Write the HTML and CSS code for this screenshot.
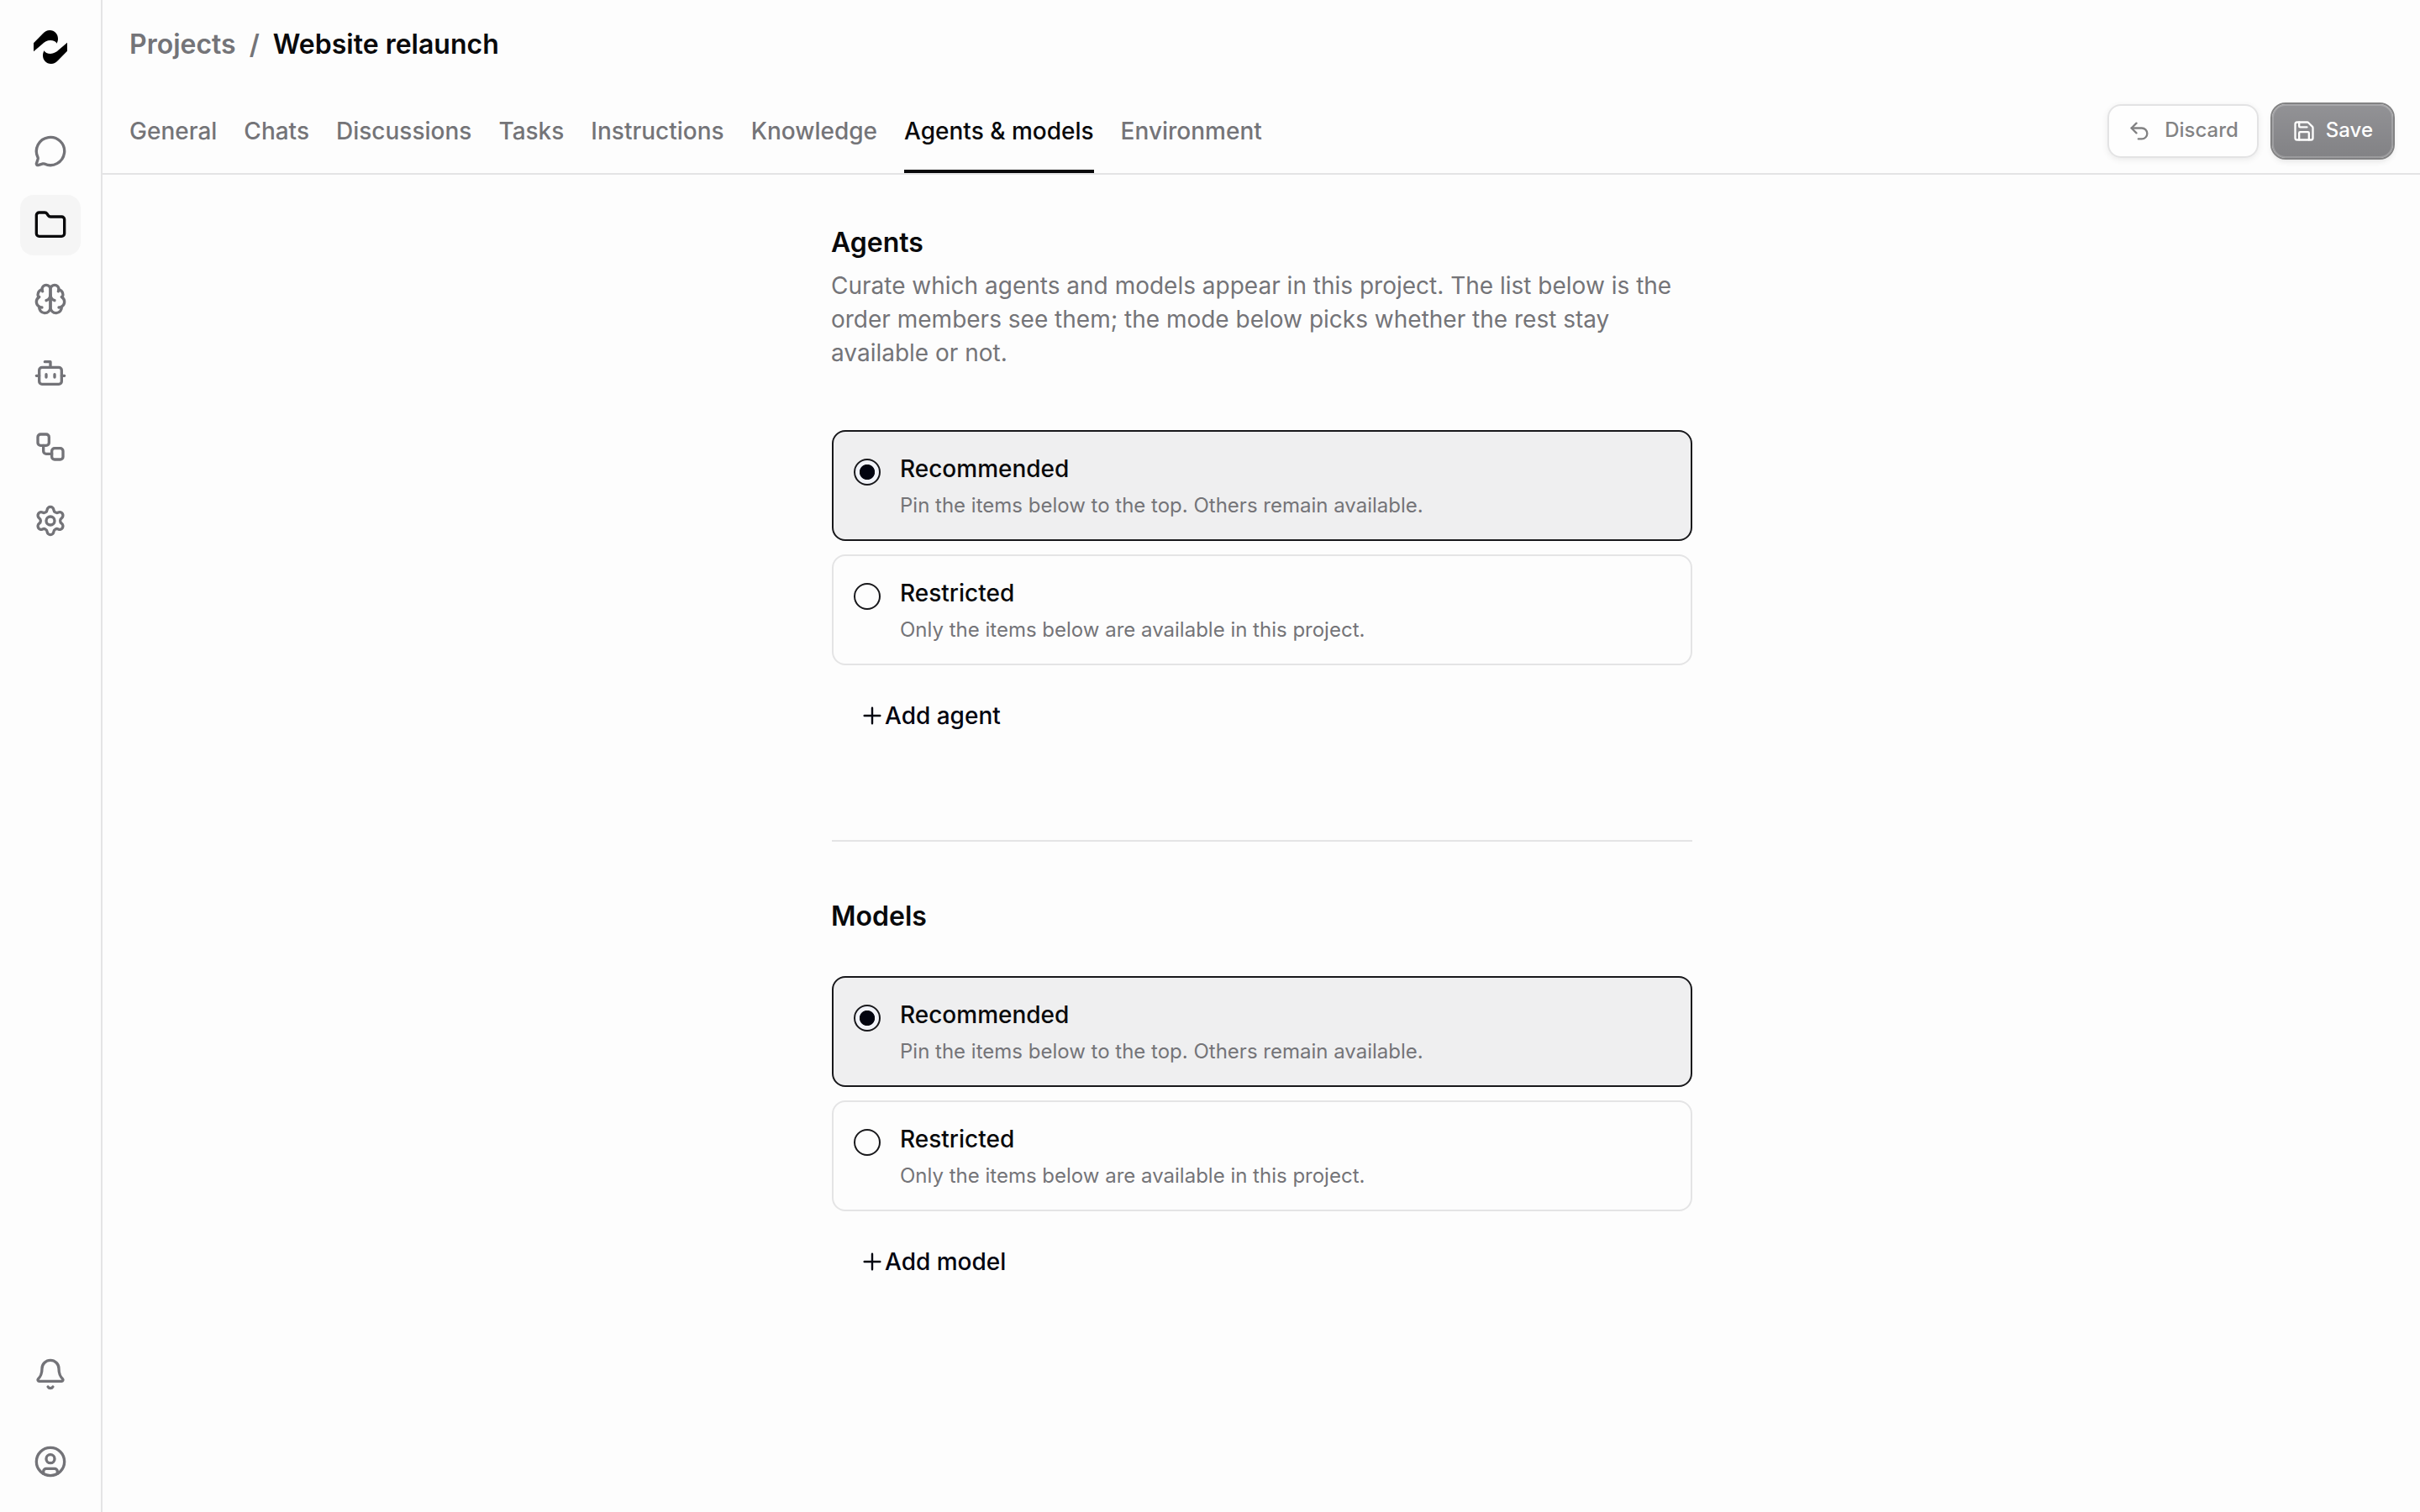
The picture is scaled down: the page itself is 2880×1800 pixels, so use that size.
FILE: index.html
```html
<!DOCTYPE html>
<html lang="en">
<head>
  <meta charset="UTF-8" />
  <meta name="viewport" content="width=device-width, initial-scale=1" />
  <title>Website relaunch - Agents &amp; models</title>
  <link rel="stylesheet" href="styles.css">
</head>
<body>
  <!-- Sidebar Navigation -->
  <nav class="sidebar">
    <a class="logo" href="#">
      <svg viewBox="0 0 40 40" fill="currentColor">
        <path id="logo-half" d="M0 25.3V15.2L11 4C13.600 1.300 16 0 19.200 0C25 0 29 4.500 29 10C29 12 28.500 13.800 27.500 15.700C26.500 13.300 23.500 12 20 12C16 12 13 14 10 16.700Z" />
        <use href="#logo-half" transform="rotate(180 20 20)" />
      </svg>
    </a>

    <a class="nav-item" href="#">
      <svg class="icon" viewBox="0 0 24 24"><path d="M2.992 16.342a2 2 0 0 1 .094 1.167l-1.065 3.290a1 1 0 0 0 1.236 1.168l3.413-.998a2 2 0 0 1 1.099.092 10 10 0 1 0-4.777-4.719" /></svg>
    </a>
    <a class="nav-item active" href="#">
      <svg class="icon" viewBox="0 0 24 24"><path d="M20 20a2 2 0 0 0 2-2V8a2 2 0 0 0-2-2h-7.900a2 2 0 0 1-1.690-.900L9.600 3.900A2 2 0 0 0 7.930 3H4a2 2 0 0 0-2 2v13a2 2 0 0 0 2 2Z" /></svg>
    </a>
    <a class="nav-item" href="#">
      <svg class="icon" viewBox="0 0 24 24">
        <path d="M12 5a3 3 0 1 0-5.997.125 4 4 0 0 0-2.526 5.770 4 4 0 0 0 .556 6.588A4 4 0 1 0 12 18Z" />
        <path d="M12 5a3 3 0 1 1 5.997.125 4 4 0 0 1 2.526 5.770 4 4 0 0 1-.556 6.588A4 4 0 1 1 12 18Z" />
        <path d="M15 13a4.500 4.500 0 0 1-3-4 4.500 4.500 0 0 1-3 4" />
        <path d="M17.599 6.500a3 3 0 0 0 .399-1.375" />
        <path d="M6.003 5.125A3 3 0 0 0 6.401 6.500" />
        <path d="M3.477 10.896a4 4 0 0 1 .585-.396" />
        <path d="M19.938 10.500a4 4 0 0 1 .585.396" />
        <path d="M6 18a4 4 0 0 1-1.967-.516" />
        <path d="M19.967 17.484A4 4 0 0 1 18 18" />
      </svg>
    </a>
    <a class="nav-item" href="#">
      <svg class="icon" viewBox="0 0 24 24">
        <path d="M12 8V4H8" />
        <rect width="16" height="12" x="4" y="8" rx="2" />
        <path d="M2 14h2M20 14h2M15 13v2M9 13v2" />
      </svg>
    </a>
    <a class="nav-item" href="#">
      <svg class="icon" viewBox="0 0 24 24">
        <rect width="8" height="8" x="3" y="3" rx="2" />
        <path d="M7 11v4a2 2 0 0 0 2 2h4" />
        <rect width="8" height="8" x="13" y="13" rx="2" />
      </svg>
    </a>
    <a class="nav-item" href="#">
      <svg class="icon" viewBox="0 0 24 24">
        <path d="M9.671 4.136a2.340 2.340 0 0 1 4.659 0 2.340 2.340 0 0 0 3.319 1.915 2.340 2.340 0 0 1 2.330 4.033 2.340 2.340 0 0 0 0 3.831 2.340 2.340 0 0 1-2.330 4.033 2.340 2.340 0 0 0-3.319 1.915 2.340 2.340 0 0 1-4.659 0 2.340 2.340 0 0 0-3.320-1.915 2.340 2.340 0 0 1-2.330-4.033 2.340 2.340 0 0 0 0-3.831A2.340 2.340 0 0 1 6.350 6.051a2.340 2.340 0 0 0 3.319-1.915" />
        <circle cx="12" cy="12" r="3" />
      </svg>
    </a>

    <div class="sidebar-bottom">
      <a class="nav-item" href="#">
        <svg class="icon" viewBox="0 0 24 24">
          <path d="M10.268 21a2 2 0 0 0 3.464 0" />
          <path d="M3.262 15.326A1 1 0 0 0 4 17h16a1 1 0 0 0 .740-1.673C19.410 13.956 18 12.499 18 8A6 6 0 0 0 6 8c0 4.499-1.411 5.956-2.738 7.326" />
        </svg>
      </a>
      <a class="nav-item" href="#">
        <svg class="icon" viewBox="0 0 24 24">
          <circle cx="12" cy="12" r="10" />
          <circle cx="12" cy="10" r="3" />
          <path d="M7 20.662V19a2 2 0 0 1 2-2h6a2 2 0 0 1 2 2v1.662" />
        </svg>
      </a>
    </div>
  </nav>

  <!-- Main Content Area -->
  <div class="main-container">
    <header>
      <div class="breadcrumb">
        <a href="#">Projects</a>
        <span>/</span>
        <h1>Website relaunch</h1>
      </div>
      <div class="tab-bar">
        <div class="tabs">
          <a class="tab" href="#">General</a>
          <a class="tab" href="#">Chats</a>
          <a class="tab" href="#">Discussions</a>
          <a class="tab" href="#">Tasks</a>
          <a class="tab" href="#">Instructions</a>
          <a class="tab" href="#">Knowledge</a>
          <a class="tab active" href="#">Agents &amp; models</a>
          <a class="tab" href="#">Environment</a>
        </div>
        <div class="actions">
          <button class="btn btn-discard" disabled>
            <svg class="icon" viewBox="0 0 24 24"><path d="M9 14 4 9l5-5" /><path d="M4 9h10.500a5.500 5.500 0 0 1 5.500 5.500a5.500 5.500 0 0 1-5.500 5.500H11" /></svg>
            <span>Discard</span>
          </button>
          <button class="btn btn-save" disabled>
            <svg class="icon" viewBox="0 0 24 24">
              <path d="M15.200 3a2 2 0 0 1 1.400.600l3.800 3.800a2 2 0 0 1 .600 1.400V19a2 2 0 0 1-2 2H5a2 2 0 0 1-2-2V5a2 2 0 0 1 2-2z" />
              <path d="M17 21v-7a1 1 0 0 0-1-1H8a1 1 0 0 0-1 1v7" />
              <path d="M7 3v4a1 1 0 0 0 1 1h7" />
            </svg>
            <span>Save</span>
          </button>
        </div>
      </div>
    </header>

    <main class="content">
      <section>
        <h2>Agents</h2>
        <p class="description">Curate which agents and models appear in this project. The list below is the order members see them; the mode below picks whether the rest stay available or not.</p>
        <div class="options">
          <label class="option selected">
            <input type="radio" name="agents" checked />
            <span class="option-text"><strong>Recommended</strong><small>Pin the items below to the top. Others remain available.</small></span>
          </label>
          <label class="option">
            <input type="radio" name="agents" />
            <span class="option-text"><strong>Restricted</strong><small>Only the items below are available in this project.</small></span>
          </label>
        </div>
        <button class="add-btn"><svg class="icon" viewBox="0 0 24 24"><path d="M5 12h14M12 5v14" /></svg>Add agent</button>
      </section>

      <section class="models">
        <h2>Models</h2>
        <div class="options">
          <label class="option selected">
            <input type="radio" name="models" checked />
            <span class="option-text"><strong>Recommended</strong><small>Pin the items below to the top. Others remain available.</small></span>
          </label>
          <label class="option">
            <input type="radio" name="models" />
            <span class="option-text"><strong>Restricted</strong><small>Only the items below are available in this project.</small></span>
          </label>
        </div>
        <button class="add-btn"><svg class="icon" viewBox="0 0 24 24"><path d="M5 12h14M12 5v14" /></svg>Add model</button>
      </section>
    </main>
  </div>
</body>
</html>
```
FILE: styles.css
```css
* {
  box-sizing: border-box;
  margin: 0;
  padding: 0;
}

html, body {
  height: 100%;
}

body {
  display: flex;
  background-color: #fdfdfd;
  color: #09090b;
  font-family: Inter, sans-serif;
  font-size: 28px;
  line-height: 40px;
}

a {
  color: inherit;
  text-decoration: none;
}

button {
  font-family: inherit;
  color: inherit;
  border: none;
  background: none;
}

.icon {
  width: 40px;
  height: 40px;
  flex-shrink: 0;
  fill: none;
  stroke: currentColor;
  stroke-width: 2;
  stroke-linecap: round;
  stroke-linejoin: round;
}

.sidebar {
  width: 122px;
  flex-shrink: 0;
  display: flex;
  flex-direction: column;
  align-items: center;
  gap: 16px;
  padding: 36px 0 24px;
  border-right: 2px solid #e4e4e5;
}

.logo {
  width: 40px;
  height: 40px;
  margin-bottom: 52px;
  color: #000;
}

.logo svg {
  display: block;
  width: 100%;
  height: 100%;
}

.nav-item {
  display: flex;
  align-items: center;
  justify-content: center;
  width: 72px;
  height: 72px;
  border-radius: 16px;
  color: #737378;
}

.nav-item.active {
  background-color: #f5f5f5;
  color: #09090b;
}

.sidebar-bottom {
  display: flex;
  flex-direction: column;
  gap: 32px;
  margin-top: auto;
}

.main-container {
  flex: 1;
}

.breadcrumb {
  display: flex;
  align-items: center;
  gap: 16px;
  height: 104px;
  padding: 2px 32px 0;
  font-size: 32px;
  font-weight: 600;
  color: #747478;
}

.breadcrumb h1 {
  font-size: 32px;
  font-weight: 600;
  color: #09090b;
}

.tab-bar {
  display: flex;
  align-items: center;
  justify-content: space-between;
  height: 104px;
  padding: 2px 32px 0;
  border-bottom: 2px solid #e4e4e5;
}

.tabs {
  display: flex;
  gap: 32px;
  height: 100%;
}

.tab {
  position: relative;
  line-height: 100px;
  font-weight: 500;
  color: #747478;
}

.tab.active {
  color: #09090b;
}

.tab.active::after {
  content: "";
  position: absolute;
  left: 0;
  right: 0;
  bottom: 0;
  height: 4px;
  background-color: #09090b;
}

.actions {
  display: flex;
  gap: 16px;
}

.btn {
  display: flex;
  align-items: center;
  height: 64px;
  padding: 0 24px;
  border-radius: 16px;
  font-size: 24px;
  font-weight: 500;
  line-height: 32px;
  opacity: 0.5;
}

.btn span {
  margin-bottom: 2px;
}

.btn .icon {
  width: 28px;
  height: 28px;
}

.btn-discard {
  gap: 16px;
  background-color: #fff;
  box-shadow: inset 0 0 0 2px #cbcbcd, 0 2px 6px rgba(0, 0, 0, 0.14);
}

.btn-save {
  gap: 12px;
  color: #fff;
  background: linear-gradient(#2a2a31, #09090f);
  box-shadow: 0 0 0 2px #09090b, inset 0 0 0 2px rgba(255, 255, 255, 0.2), 0 4px 6px rgba(0, 0, 0, 0.2);
}

.content {
  width: 1024px;
  margin: 0 auto;
  padding-top: 56px;
  position: relative;
  left: 1px;
}

h2 {
  margin-left: -1px;
  padding-top: 1px;
  font-size: 32px;
  font-weight: 600;
  line-height: 48px;
}

.description {
  margin: 7px 0 72px -1px;
  color: #747478;
}

.options {
  display: flex;
  flex-direction: column;
  gap: 16px;
}

.option {
  display: flex;
  align-items: flex-start;
  gap: 23px;
  padding: 24px;
  border: 2px solid #e4e4e5;
  border-radius: 16px;
}

.option.selected {
  border-color: #18181b;
  background-color: #efeff0;
}

.option input {
  appearance: none;
  width: 32px;
  height: 32px;
  margin-top: 8px;
  border: 2px solid #18181b;
  border-radius: 50%;
}

.option input:checked {
  background: radial-gradient(circle, #020410 8.7px, #f1f3f9 9.5px);
}

.option-text {
  display: flex;
  flex-direction: column;
  gap: 8px;
}

.option strong {
  font-weight: 500;
}

.option small {
  font-size: 24px;
  line-height: 32px;
  color: #747478;
}

.add-btn {
  display: flex;
  align-items: center;
  height: 64px;
  margin-top: 28px;
  padding: 0 32px;
  font-size: 28px;
  font-weight: 500;
  color: #020410;
}

.add-btn .icon {
  width: 32px;
  height: 32px;
  margin-right: -1px;
  stroke-width: 1.8;
}

/* second block sits under a divider */
.models {
  margin-top: 116px;
  padding-top: 64px;
  border-top: 2px solid #e4e4e5;
}

.models h2 {
  margin-bottom: 47px;
}
```
